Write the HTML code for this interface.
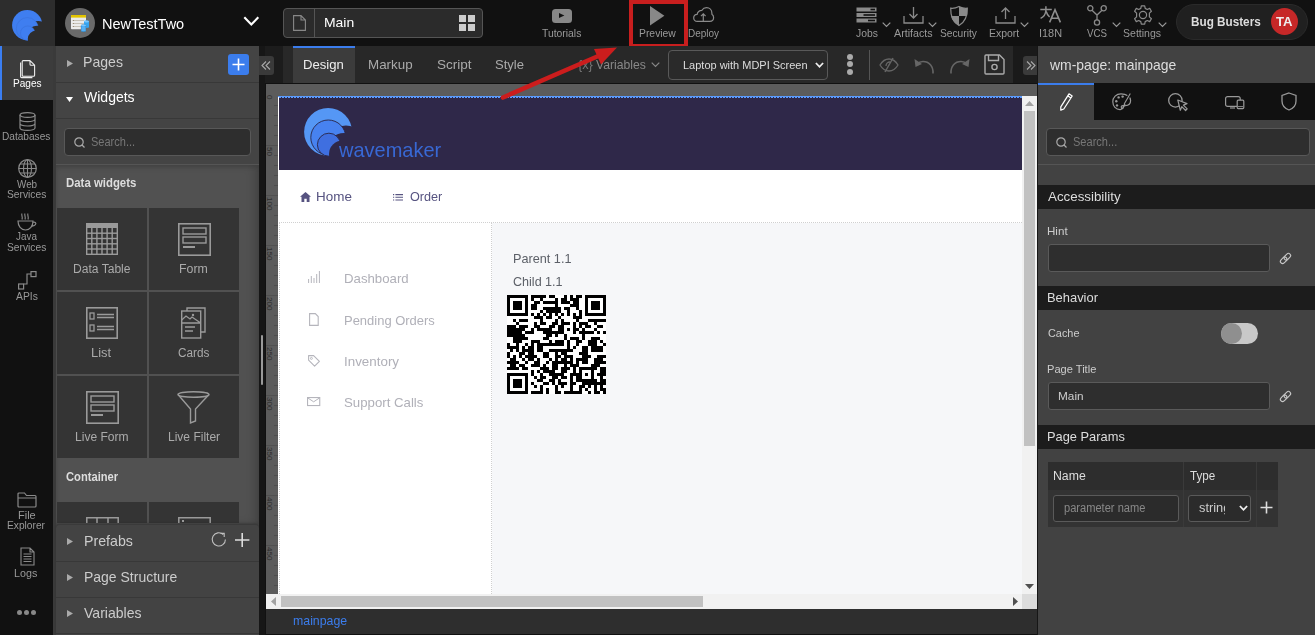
<!DOCTYPE html>
<html><head><meta charset="utf-8">
<style>
*{box-sizing:border-box;margin:0;padding:0}
html,body{width:1315px;height:635px;overflow:hidden;background:#111;font-family:"Liberation Sans",sans-serif}
.a{position:absolute}
.t{position:absolute;white-space:nowrap;line-height:1}
svg{position:absolute;overflow:visible}
</style></head><body>

<!-- ============ TOP BAR ============ -->
<div class="a" style="left:0;top:0;width:1315px;height:46px;background:#111"></div>
<div class="a" style="left:0;top:0;width:55px;height:46px;background:#2d2d2d"></div>
<!-- logo -->
<svg style="left:12px;top:9.6px" width="29.70" height="30.97" viewBox="0 0 47 49">
<defs><mask id="m1t"><rect x="-5" y="-5" width="60" height="60" fill="#fff"/><circle cx="42" cy="38" r="20.5" fill="#000"/></mask>
<mask id="m2t"><rect x="-5" y="-5" width="60" height="60" fill="#fff"/><circle cx="40" cy="42" r="17" fill="#000"/></mask>
<mask id="m3t"><rect x="-5" y="-5" width="60" height="60" fill="#fff"/><circle cx="38.5" cy="46" r="13.5" fill="#000"/></mask></defs>
<circle cx="24.1" cy="23.9" r="24" fill="#3f7ef0" mask="url(#m1t)"/>
<circle cx="24.3" cy="29.5" r="17.5" fill="#3f7ef0" stroke="#3a70d8" stroke-width="0.8" mask="url(#m2t)"/>
<circle cx="24.9" cy="36.7" r="11.5" fill="#3f7ef0" stroke="#3a70d8" stroke-width="0.8" mask="url(#m3t)"/>
</svg>
<!-- app icon -->
<div class="a" style="left:65px;top:8px;width:30px;height:30px;border-radius:50%;background:#6a6a6a"></div>
<svg style="left:71px;top:15px" width="19" height="18" viewBox="0 0 19 18">
<rect x="0" y="0" width="15" height="14.3" rx="0.8" fill="#ebebeb"/>
<rect x="0" y="0" width="15" height="2.6" fill="#e3c400"/>
<path d="M2 5.5 H13 M2 8.5 H13 M2 11.5 H13" stroke="#b8b0a0" stroke-width="0.7"/>
<circle cx="2.3" cy="5.5" r="0.6" fill="#8a7a60"/><circle cx="2.3" cy="8.5" r="0.6" fill="#8a7a60"/><circle cx="2.3" cy="11.5" r="0.6" fill="#8a7a60"/>
<path d="M13 6.5 C13 5.3 18 5.3 18 6.5 V12 C18 13.2 13 13.2 13 12Z" fill="#35a4f0"/>
<ellipse cx="15.5" cy="6.5" rx="2.5" ry="1" fill="#7cc8ff"/>
<path d="M10 10.5 C10 9.3 15 9.3 15 10.5 V16 C15 17.2 10 17.2 10 16Z" fill="#2d9cf0" stroke="#6a6a6a" stroke-width="0.3"/>
<ellipse cx="12.5" cy="10.5" rx="2.5" ry="1" fill="#7cc8ff"/>
<path d="M10.5 13 H14.5 M10.5 15 H14.5" stroke="#bfe3ff" stroke-width="0.6"/>
</svg>
<div class="t" style="left:102.33px;top:17.00px;font-size:14.5px;color:#fff;transform-origin:0 0;transform:scaleX(0.9999)">NewTestTwo</div>
<svg style="left:242.5px;top:15.5px" width="17" height="11" viewBox="0 0 17 11"><path d="M1.3 1.3 L8.3 8.6 L15.3 1.3" stroke="#fff" stroke-width="2.1" fill="none"/></svg>

<!-- page selector -->
<div class="a" style="left:283px;top:8px;width:200px;height:30px;border:1px solid #555;border-radius:4px;background:#2b2b2b"></div>
<div class="a" style="left:314px;top:9px;width:1px;height:28px;background:#555"></div>
<svg style="left:292.5px;top:15px" width="14" height="16" viewBox="0 0 14 16"><path d="M0.6 0.6 H8 L12.4 5 V15.4 H0.6Z M8 0.6 V5 H12.4" stroke="#888" stroke-width="1.1" fill="none"/></svg>
<div class="t" style="left:323.93px;top:16.00px;font-size:13px;color:#fff;transform-origin:0 0;transform:scaleX(1.0726)">Main</div>
<div class="a" style="left:459px;top:15px;width:7px;height:7px;background:#ccc"></div>
<div class="a" style="left:468px;top:15px;width:7px;height:7px;background:#ccc"></div>
<div class="a" style="left:459px;top:24px;width:7px;height:7px;background:#ccc"></div>
<div class="a" style="left:468px;top:24px;width:7px;height:7px;background:#ccc"></div>

<!-- top tools -->

<!-- Jobs -->
<svg style="left:856px;top:7px" width="21" height="16" viewBox="0 0 21 16">
 <rect x="0.5" y="0.5" width="20" height="4" fill="#8a8a8a"/><rect x="0.5" y="6" width="20" height="4" fill="#8a8a8a"/><rect x="0.5" y="11.5" width="20" height="4" fill="#8a8a8a"/>
 <rect x="14.5" y="1.7" width="4.5" height="1.6" fill="#111"/><rect x="7.5" y="7.2" width="11.5" height="1.6" fill="#111"/><rect x="12" y="12.7" width="7" height="1.6" fill="#111"/>
</svg>
<svg style="left:882px;top:22px" width="9" height="6" viewBox="0 0 9 6"><path d="M0.7 0.7 L4.5 4.5 L8.3 0.7" stroke="#999" stroke-width="1.2" fill="none"/></svg>
<div class="t" style="left:855.64px;top:28.00px;font-size:11px;color:#999;transform-origin:0 0;transform:scaleX(0.9410)">Jobs</div>
<!-- Artifacts -->
<svg style="left:903px;top:7px" width="21" height="17" viewBox="0 0 21 17"><path d="M10.5 0 V11 M6.5 7 L10.5 11 L14.5 7 M1 9 V16 H20 V9" stroke="#8a8a8a" stroke-width="1.3" fill="none"/></svg>
<svg style="left:928px;top:22px" width="9" height="6" viewBox="0 0 9 6"><path d="M0.7 0.7 L4.5 4.5 L8.3 0.7" stroke="#999" stroke-width="1.2" fill="none"/></svg>
<div class="t" style="left:893.68px;top:28.00px;font-size:11px;color:#999;transform-origin:0 0;transform:scaleX(0.9729)">Artifacts</div>
<!-- Security -->
<svg style="left:950px;top:6px" width="18" height="20" viewBox="0 0 18 20"><path d="M9 0.5 C6 2 3 2.5 0.7 2.2 C0.5 10 3 16 9 19.5 C15 16 17.5 10 17.3 2.2 C15 2.5 12 2 9 0.5Z" stroke="#8a8a8a" stroke-width="1.2" fill="none"/><path d="M9 0.5 V10 H17.1 C17.3 7 17.4 4.5 17.3 2.2 C15 2.5 12 2 9 0.5Z M9 10 H1 C2 14 4.5 17.5 9 19.5Z" fill="#8a8a8a"/></svg>
<div class="t" style="left:940.32px;top:28.00px;font-size:11px;color:#999;transform-origin:0 0;transform:scaleX(0.9267)">Security</div>
<!-- Export -->
<svg style="left:995px;top:7px" width="21" height="17" viewBox="0 0 21 17"><path d="M10.5 12 V1 M6.5 5 L10.5 1 L14.5 5 M1 9 V16 H20 V9" stroke="#8a8a8a" stroke-width="1.3" fill="none"/></svg>
<svg style="left:1020px;top:22px" width="9" height="6" viewBox="0 0 9 6"><path d="M0.7 0.7 L4.5 4.5 L8.3 0.7" stroke="#999" stroke-width="1.2" fill="none"/></svg>
<div class="t" style="left:988.96px;top:28.00px;font-size:11px;color:#999;transform-origin:0 0;transform:scaleX(0.9508)">Export</div>
<!-- I18N -->
<svg style="left:1040px;top:6px" width="22" height="17" viewBox="0 0 22 17"><path d="M0.3 3.6 H11.8 M5.9 0.3 V4.5 C5.6 8 3.6 11 0.6 12.4 M6.2 5.5 C7 8.2 8.4 10 9.6 11" stroke="#8e8e8e" stroke-width="1.5" fill="none"/><path d="M9.6 16.4 L15 3.8 L20.4 16.4 M11.4 12.2 H18.6" stroke="#8e8e8e" stroke-width="1.6" fill="none"/></svg>

<div class="t" style="left:1038.76px;top:28.00px;font-size:11px;color:#999;transform-origin:0 0;transform:scaleX(0.9931)">I18N</div>
<!-- VCS -->
<svg style="left:1087px;top:5px" width="20" height="21" viewBox="0 0 20 21"><circle cx="3.3" cy="3.3" r="2.6" stroke="#8a8a8a" stroke-width="1.3" fill="none"/><circle cx="16.7" cy="3.3" r="2.6" stroke="#8a8a8a" stroke-width="1.3" fill="none"/><circle cx="10" cy="17.5" r="2.6" stroke="#8a8a8a" stroke-width="1.3" fill="none"/><path d="M5 5.3 L10 10 L15 5.3 M10 10 V15" stroke="#8a8a8a" stroke-width="1.3" fill="none"/></svg>
<svg style="left:1112px;top:22px" width="9" height="6" viewBox="0 0 9 6"><path d="M0.7 0.7 L4.5 4.5 L8.3 0.7" stroke="#999" stroke-width="1.2" fill="none"/></svg>
<div class="t" style="left:1086.69px;top:28.00px;font-size:11px;color:#999;transform-origin:0 0;transform:scaleX(0.8859)">VCS</div>
<!-- Settings -->
<svg style="left:1133px;top:5px" width="20" height="20" viewBox="0 0 20 20"><path id="gear" d="M8.3 0.8 H11.7 L12.2 3.4 L14.3 4.5 L16.7 3.4 L18.4 6.3 L16.4 8.1 V11.9 L18.4 13.7 L16.7 16.6 L14.3 15.5 L12.2 16.6 L11.7 19.2 H8.3 L7.8 16.6 L5.7 15.5 L3.3 16.6 L1.6 13.7 L3.6 11.9 V8.1 L1.6 6.3 L3.3 3.4 L5.7 4.5 L7.8 3.4Z" stroke="#8a8a8a" stroke-width="1.2" fill="none" stroke-linejoin="round"/><circle cx="10" cy="10" r="3.6" stroke="#8a8a8a" stroke-width="1.2" fill="none"/></svg>
<svg style="left:1158px;top:22px" width="9" height="6" viewBox="0 0 9 6"><path d="M0.7 0.7 L4.5 4.5 L8.3 0.7" stroke="#999" stroke-width="1.2" fill="none"/></svg>
<div class="t" style="left:1123.29px;top:28.00px;font-size:11px;color:#999;transform-origin:0 0;transform:scaleX(0.9574)">Settings</div>

<!-- Tutorials -->
<div class="a" style="left:551.6px;top:8.7px;width:20px;height:14.1px;background:#888;border-radius:3.5px"></div>
<svg style="left:559.4px;top:12.9px" width="6" height="6" viewBox="0 0 6 6"><path d="M0 0 L5.4 2.5 L0 5Z" fill="#111"/></svg>
<div class="t tl" style="left:542.03px;top:28.00px;font-size:11px;color:#999;transform-origin:0 0;transform:scaleX(0.9415)">Tutorials</div>
<!-- Preview -->
<div class="a" style="left:629.3px;top:0;width:58.4px;height:47.6px;border:4.7px solid #c81e1e;border-top-width:4px"></div>
<svg style="left:650.4px;top:5.7px" width="15" height="20" viewBox="0 0 15 20"><path d="M0 0 L14.4 9.7 L0 19.4Z" fill="#888"/></svg>
<div class="t" style="left:638.77px;top:28.00px;font-size:11px;color:#999;transform-origin:0 0;transform:scaleX(0.9421)">Preview</div>
<!-- Deploy -->
<svg style="left:693px;top:7px" width="22" height="16" viewBox="0 0 22 16"><path d="M4.2 14.4 C2 14.4 0.7 12.8 0.7 10.9 C0.7 9 2.1 7.5 4.1 7.4 C4.6 5 6.5 3.3 8.9 3.3 C9.9 1.7 11.6 0.7 13.5 0.7 C16.6 0.7 18.9 3.1 18.9 6.2 V7.2 C20.1 7.9 20.6 9.1 20.6 10.6 C20.6 12.8 19 14.4 16.8 14.4Z" stroke="#8a8a8a" stroke-width="1.2" fill="none"/><path d="M10.3 14.4 V6.8 M8 9.1 L10.3 6.8 L12.6 9.1" stroke="#8a8a8a" stroke-width="1.2" fill="none"/></svg>
<div class="t" style="left:687.97px;top:28.00px;font-size:11px;color:#999;transform-origin:0 0;transform:scaleX(0.9082)">Deploy</div>

<!-- Bug Busters pill -->
<div class="a" style="left:1176px;top:4.2px;width:131.8px;height:35.8px;border-radius:18px;background:#202020;border:1px solid #2a2a2a"></div>
<div class="t" style="left:1191.18px;top:16.00px;font-size:12px;font-weight:bold;color:#ddd;transform-origin:0 0;transform:scaleX(0.9771)">Bug Busters</div>
<div class="a" style="left:1270.6px;top:7.6px;width:27.8px;height:27.8px;border-radius:50%;background:#c62828"></div>
<div class="t" style="left:1275.66px;top:16.00px;font-size:12px;font-weight:bold;color:#eee;transform-origin:0 0;transform:scaleX(1.0958)">TA</div>

<!-- ============ LEFT SIDEBAR ============ -->
<div class="a" style="left:0;top:46px;width:55px;height:589px;background:#111"></div>
<div class="a" style="left:0;top:46px;width:55px;height:54px;background:#3c3c3c"></div>
<div class="a" style="left:0;top:46px;width:1.5px;height:54px;background:#3a7ef2"></div>


<!-- Pages icon -->
<svg style="left:19.5px;top:59.5px" width="16" height="18" viewBox="0 0 16 18"><path d="M3.2 0.6 H10 L14.6 5.2 V15.2 C14.6 15.8 14.2 16.2 13.6 16.2 H3.2 C2.6 16.2 2.2 15.8 2.2 15.2 V1.6 C2.2 1 2.6 0.6 3.2 0.6Z M10 0.6 V4.2 C10 4.8 10.4 5.2 11 5.2 H14.6" stroke="#eee" stroke-width="1.1" fill="none" stroke-linejoin="round"/><path d="M0.6 2.6 V16.6 C0.6 17.2 1 17.6 1.6 17.6 H12.4" stroke="#eee" stroke-width="1.1" fill="none"/></svg>
<div class="t" style="left:12.50px;top:78.00px;font-size:11px;color:#fff;transform-origin:0 0;transform:scaleX(0.9186)">Pages</div>
<!-- Databases -->
<svg style="left:19px;top:112px" width="17" height="19" viewBox="0 0 17 19"><ellipse cx="8.5" cy="3" rx="7.5" ry="2.4" stroke="#8a8a8a" stroke-width="1.2" fill="none"/><path d="M1 3 V16 C1 17.4 4.5 18.4 8.5 18.4 C12.5 18.4 16 17.4 16 16 V3 M1 7.3 C1 8.7 4.5 9.7 8.5 9.7 C12.5 9.7 16 8.7 16 7.3 M1 11.6 C1 13 4.5 14 8.5 14 C12.5 14 16 13 16 11.6" stroke="#8a8a8a" stroke-width="1.2" fill="none"/></svg>
<div class="t" style="left:2.46px;top:131.00px;font-size:11px;color:#999;transform-origin:0 0;transform:scaleX(0.9192)">Databases</div>
<!-- Web Services -->
<svg style="left:18px;top:159px" width="19" height="19" viewBox="0 0 19 19"><circle cx="9.5" cy="9.5" r="8.8" stroke="#8a8a8a" stroke-width="1.2" fill="none"/><ellipse cx="9.5" cy="9.5" rx="4" ry="8.8" stroke="#8a8a8a" stroke-width="1.1" fill="none"/><path d="M9.5 0.7 V18.3 M0.7 9.5 H18.3 M2 5 H17 M2 14 H17" stroke="#8a8a8a" stroke-width="1.1" fill="none"/></svg>
<div class="t" style="left:17.31px;top:179.00px;font-size:11px;color:#999;transform-origin:0 0;transform:scaleX(0.8970)">Web</div>
<div class="t" style="left:7.01px;top:189.00px;font-size:11px;color:#999;transform-origin:0 0;transform:scaleX(0.9325)">Services</div>
<!-- Java -->
<svg style="left:17px;top:213px" width="20" height="18" viewBox="0 0 20 18"><path d="M5 0.5 C4 2 6 3.5 5 6.5 M8 0.5 C7 2 9 3.5 8 6.5 M11 0.5 C10 2 12 3.5 11 6.5" stroke="#8a8a8a" stroke-width="1.1" fill="none"/><path d="M1 8 H16 C16 13 13 17 8.5 17 C4 17 1 13 1 8Z M15.5 9.5 C18 8.5 19.5 10 18.5 11.5 C17.5 13 15.5 13 14 13.5" stroke="#8a8a8a" stroke-width="1.2" fill="none"/></svg>
<div class="t" style="left:16.45px;top:231.00px;font-size:11px;color:#999;transform-origin:0 0;transform:scaleX(0.9016)">Java</div>
<div class="t" style="left:7.01px;top:242.00px;font-size:11px;color:#999;transform-origin:0 0;transform:scaleX(0.9325)">Services</div>
<!-- APIs -->
<svg style="left:18px;top:271px" width="19" height="19" viewBox="0 0 19 19"><rect x="0.6" y="13" width="5" height="5" stroke="#8a8a8a" stroke-width="1.2" fill="none"/><rect x="13" y="0.6" width="5" height="5" stroke="#8a8a8a" stroke-width="1.2" fill="none"/><path d="M5.6 13 H9 V3 H13" stroke="#8a8a8a" stroke-width="1.2" fill="none"/></svg>
<div class="t" style="left:16.19px;top:291.00px;font-size:11px;color:#999;transform-origin:0 0;transform:scaleX(0.9385)">APIs</div>
<!-- File Explorer -->
<svg style="left:17px;top:492px" width="20" height="16" viewBox="0 0 20 16"><path d="M1 2 C1 1.3 1.3 1 2 1 H7.5 L9.5 3.5 H18 C18.7 3.5 19 3.8 19 4.5 V14 C19 14.7 18.7 15 18 15 H2 C1.3 15 1 14.7 1 14Z M1 6 H19" stroke="#8a8a8a" stroke-width="1.2" fill="none"/></svg>
<div class="t" style="left:17.61px;top:510.00px;font-size:11px;color:#999;transform-origin:0 0;transform:scaleX(0.9993)">File</div>
<div class="t" style="left:7.09px;top:520.00px;font-size:11px;color:#999;transform-origin:0 0;transform:scaleX(0.9267)">Explorer</div>
<!-- Logs -->
<svg style="left:20px;top:547px" width="15" height="19" viewBox="0 0 15 19"><path d="M1 1 H10 L14 5 V18 H1Z M10 1 V5 H14 M3.5 7 H11.5 M3.5 9.5 H11.5 M3.5 12 H11.5 M3.5 14.5 H11.5" stroke="#8a8a8a" stroke-width="1.1" fill="none"/></svg>
<div class="t" style="left:14.39px;top:568.00px;font-size:11px;color:#999;transform-origin:0 0;transform:scaleX(0.9752)">Logs</div>
<!-- dots -->
<div class="a" style="left:17.4px;top:609.8px;width:5px;height:5px;border-radius:50%;background:#888"></div>
<div class="a" style="left:24.1px;top:609.8px;width:5px;height:5px;border-radius:50%;background:#888"></div>
<div class="a" style="left:30.8px;top:609.8px;width:5px;height:5px;border-radius:50%;background:#888"></div>

<!-- ============ LEFT PANEL ============ -->

<div class="a" style="left:53px;top:46px;width:3px;height:589px;background:#3a3a3a"></div>
<div class="a" style="left:56px;top:46px;width:203px;height:589px;background:#444"></div>
<!-- Pages header -->
<div class="a" style="left:56px;top:82px;width:203px;height:1px;background:#383838"></div>
<svg style="left:67px;top:60px" width="6" height="7" viewBox="0 0 6 7"><path d="M0 0 L6 3.5 L0 7Z" fill="#aaa"/></svg>
<div class="t" style="left:83.48px;top:54.00px;font-size:15px;color:#ccc;transform-origin:0 0;transform:scaleX(0.9398)">Pages</div>
<div class="a" style="left:228px;top:54px;width:21px;height:21px;border-radius:3px;background:#3b7ded"></div>
<svg style="left:231px;top:57px" width="15" height="15" viewBox="0 0 15 15"><path d="M7.5 1.5 V13.5 M1.5 7.5 H13.5" stroke="#fff" stroke-width="1.6"/></svg>
<!-- Widgets header -->
<div class="a" style="left:56px;top:118px;width:203px;height:1px;background:#383838"></div>
<svg style="left:66px;top:97px" width="7" height="5" viewBox="0 0 7 5"><path d="M0 0 H7 L3.5 5Z" fill="#fff"/></svg>
<div class="t" style="left:84.43px;top:89.00px;font-size:15px;color:#fff;transform-origin:0 0;transform:scaleX(0.9342)">Widgets</div>
<!-- search -->
<div class="a" style="left:64px;top:128px;width:187px;height:28px;border:1px solid #585858;border-radius:4px;background:#2e2e2e"></div>
<svg style="left:74px;top:137px" width="11" height="11" viewBox="0 0 11 11"><circle cx="5" cy="5" r="4.2" stroke="#aaa" stroke-width="1.2" fill="none"/><path d="M8 8 L10.5 10.5" stroke="#aaa" stroke-width="1.2"/></svg>
<div class="t" style="left:91.28px;top:136.00px;font-size:12.5px;color:#777;transform-origin:0 0;transform:scaleX(0.8819)">Search...</div>
<div class="a" style="left:56px;top:164px;width:203px;height:1px;background:#555"></div>
<!-- widgets section -->
<div class="a" style="left:56px;top:165px;width:203px;height:359px;background:#515151;box-shadow:inset 0 2px 4px rgba(0,0,0,.12), inset -5px 0 8px rgba(0,0,0,.15)"></div>
<div class="t" style="left:65.54px;top:177.00px;font-size:12.5px;font-weight:bold;color:#ddd;transform-origin:0 0;transform:scaleX(0.9126)">Data widgets</div>
<div class="a" style="left:57px;top:208px;width:90px;height:82px;background:#343434"></div>
<svg style="left:86px;top:223px" width="32" height="32" viewBox="0 0 32 32"><rect x="0" y="0" width="32" height="5" fill="#9a9a9a"/><rect x="0.7" y="0.7" width="30.6" height="30.6" stroke="#9a9a9a" stroke-width="1.4" fill="none"/><path d="M5.8 5 V31.3" stroke="#9a9a9a" stroke-width="1.4"/><path d="M10.9 5 V31.3" stroke="#9a9a9a" stroke-width="1.4"/><path d="M16.0 5 V31.3" stroke="#9a9a9a" stroke-width="1.4"/><path d="M21.1 5 V31.3" stroke="#9a9a9a" stroke-width="1.4"/><path d="M26.2 5 V31.3" stroke="#9a9a9a" stroke-width="1.4"/><path d="M0 10.2 H32" stroke="#9a9a9a" stroke-width="1.4"/><path d="M0 15.5 H32" stroke="#9a9a9a" stroke-width="1.4"/><path d="M0 20.8 H32" stroke="#9a9a9a" stroke-width="1.4"/><path d="M0 26.0 H32" stroke="#9a9a9a" stroke-width="1.4"/></svg>
<div class="t" style="left:73.08px;top:263.00px;font-size:12px;color:#aaa;transform-origin:0 0;transform:scaleX(1.0063)">Data Table</div>

<div class="a" style="left:149px;top:208px;width:90px;height:82px;background:#343434"></div>
<svg style="left:178px;top:223px" width="33" height="33" viewBox="0 0 33 33"><rect x="0.8" y="0.8" width="31.4" height="31.4" stroke="#9a9a9a" stroke-width="1.6" fill="none"/><rect x="5" y="5" width="23" height="6" stroke="#9a9a9a" stroke-width="1.4" fill="none"/><rect x="5" y="14" width="23" height="6" stroke="#9a9a9a" stroke-width="1.4" fill="none"/><rect x="5" y="23" width="12" height="2" fill="#9a9a9a"/></svg>
<div class="t" style="left:179.45px;top:263.00px;font-size:12px;color:#aaa;transform-origin:0 0;transform:scaleX(1.0304)">Form</div>

<div class="a" style="left:57px;top:292px;width:90px;height:82px;background:#343434"></div>
<svg style="left:86px;top:307px" width="32" height="32" viewBox="0 0 32 32"><rect x="0.8" y="0.8" width="30.4" height="30.4" stroke="#9a9a9a" stroke-width="1.6" fill="none"/><rect x="4" y="6" width="4" height="6" stroke="#9a9a9a" stroke-width="1.3" fill="none"/><rect x="4" y="18" width="4" height="6" stroke="#9a9a9a" stroke-width="1.3" fill="none"/><path d="M11 7.5 H28 M11 10.5 H28 M11 19.5 H28 M11 22.5 H28" stroke="#9a9a9a" stroke-width="1.3"/></svg>
<div class="t" style="left:91.20px;top:347.00px;font-size:12px;color:#aaa;transform-origin:0 0;transform:scaleX(1.0774)">List</div>

<div class="a" style="left:149px;top:292px;width:90px;height:82px;background:#343434"></div>
<svg style="left:181px;top:307px" width="25" height="32" viewBox="0 0 25 32"><path d="M6 4 V1 H24 V25 H20" stroke="#9a9a9a" stroke-width="1.4" fill="none"/><rect x="0.7" y="4" width="19" height="27" stroke="#9a9a9a" stroke-width="1.4" fill="none"/><path d="M0.7 13 L5 9 L9 12 L11 10 L19.7 16 M0.7 16 H19.7 M4 20 H14 M4 24 H12" stroke="#9a9a9a" stroke-width="1.3" fill="none"/><circle cx="12" cy="8" r="1.2" fill="#9a9a9a"/></svg>
<div class="t" style="left:178.15px;top:347.00px;font-size:12px;color:#aaa;transform-origin:0 0;transform:scaleX(0.9801)">Cards</div>

<div class="a" style="left:57px;top:376px;width:90px;height:82px;background:#343434"></div>
<svg style="left:86px;top:391px" width="33" height="33" viewBox="0 0 33 33"><rect x="0.8" y="0.8" width="31.4" height="31.4" stroke="#9a9a9a" stroke-width="1.6" fill="none"/><rect x="5" y="5" width="23" height="6" stroke="#9a9a9a" stroke-width="1.4" fill="none"/><rect x="5" y="14" width="23" height="6" stroke="#9a9a9a" stroke-width="1.4" fill="none"/><rect x="5" y="23" width="12" height="2" fill="#9a9a9a"/></svg>
<div class="t" style="left:75.08px;top:431.00px;font-size:12px;color:#aaa;transform-origin:0 0;transform:scaleX(1.0038)">Live Form</div>

<div class="a" style="left:149px;top:376px;width:90px;height:82px;background:#343434"></div>
<svg style="left:177px;top:391px" width="33" height="33" viewBox="0 0 33 33"><ellipse cx="16.5" cy="3.5" rx="15.5" ry="2.8" stroke="#9a9a9a" stroke-width="1.4" fill="none"/><path d="M1 3.5 L13.5 18 V32 L18.5 30 V18 L32 3.5" stroke="#9a9a9a" stroke-width="1.4" fill="none"/></svg>
<div class="t" style="left:167.68px;top:431.00px;font-size:12px;color:#aaa;transform-origin:0 0;transform:scaleX(1.0012)">Live Filter</div>

<div class="t" style="left:65.78px;top:471.00px;font-size:12.5px;font-weight:bold;color:#ddd;transform-origin:0 0;transform:scaleX(0.8940)">Container</div>
<div class="a" style="left:57px;top:502px;width:90px;height:21px;background:#343434"></div>
<div class="a" style="left:149px;top:502px;width:90px;height:21px;background:#343434"></div>
<svg style="left:86px;top:517px" width="33" height="6" viewBox="0 0 33 6"><path d="M0.8 6 V0.8 H32.2 V6 M11 0.8 V6 M22 0.8 V6" stroke="#9a9a9a" stroke-width="1.5" fill="none"/></svg>
<svg style="left:178px;top:517px" width="33" height="6" viewBox="0 0 33 6"><path d="M0.8 6 V0.8 H32.2 V6" stroke="#9a9a9a" stroke-width="1.5" fill="none"/><rect x="4" y="3" width="2" height="2" fill="#9a9a9a"/></svg>
<!-- bottom headers -->
<div class="a" style="left:56px;top:524px;width:203px;height:111px;background:#434343;border-top:1px solid #3a3a3a;border-radius:4px 4px 0 0;box-shadow:0 -1px 2px rgba(0,0,0,.15)"></div>
<div class="a" style="left:56px;top:561px;width:203px;height:1px;background:#383838"></div>
<div class="a" style="left:56px;top:597px;width:203px;height:1px;background:#383838"></div>
<div class="a" style="left:56px;top:633px;width:203px;height:1px;background:#383838"></div>
<svg style="left:67px;top:538px" width="6" height="7" viewBox="0 0 6 7"><path d="M0 0 L6 3.5 L0 7Z" fill="#aaa"/></svg>
<div class="t" style="left:83.57px;top:533.00px;font-size:15px;color:#ccc;transform-origin:0 0;transform:scaleX(0.9461)">Prefabs</div>
<svg style="left:210.5px;top:532.3px" width="16" height="16" viewBox="0 0 16 16"><path d="M14.4 7.4 A6.6 6.6 0 1 1 12.3 2.6" stroke="#c0c0c0" stroke-width="1.1" fill="none"/><path d="M9.6 1.4 L13.2 1.4 L13.2 5" stroke="#c0c0c0" stroke-width="1.1" fill="none"/></svg>
<svg style="left:234.7px;top:533px" width="15" height="14" viewBox="0 0 15 14"><path d="M7.2 0 V14 M0 7 H14.4" stroke="#ddd" stroke-width="1.6"/></svg>
<svg style="left:67px;top:574px" width="6" height="7" viewBox="0 0 6 7"><path d="M0 0 L6 3.5 L0 7Z" fill="#aaa"/></svg>
<div class="t" style="left:83.59px;top:569.00px;font-size:15px;color:#ccc;transform-origin:0 0;transform:scaleX(0.9319)">Page Structure</div>
<svg style="left:67px;top:610px" width="6" height="7" viewBox="0 0 6 7"><path d="M0 0 L6 3.5 L0 7Z" fill="#aaa"/></svg>
<div class="t" style="left:84.47px;top:605.00px;font-size:15px;color:#ccc;transform-origin:0 0;transform:scaleX(0.9357)">Variables</div>


<!-- ============ TOOLBAR ============ -->
<div class="a" style="left:259px;top:46px;width:6px;height:589px;background:#161616"></div>
<div class="a" style="left:261px;top:335px;width:2px;height:50px;background:#9a9a9a;border-radius:1px"></div>


<div class="a" style="left:265px;top:46px;width:772px;height:37px;background:#282828"></div>
<div class="a" style="left:265px;top:46px;width:18px;height:37px;background:#1c1c1c"></div>
<div class="a" style="left:259px;top:56px;width:15px;height:19px;background:#3a3a3a;border-radius:0 3px 3px 0"></div>
<svg style="left:261px;top:61px" width="10" height="9" viewBox="0 0 10 9"><path d="M5 0.5 L1 4.5 L5 8.5 M9 0.5 L5 4.5 L9 8.5" stroke="#aaa" stroke-width="1.1" fill="none"/></svg>
<div class="a" style="left:293px;top:46px;width:62px;height:37px;background:#3c3c3c;border-top:2px solid #3b7ded"></div>
<div class="t" style="left:303.31px;top:58.00px;font-size:13px;color:#eee;transform-origin:0 0;transform:scaleX(1.0079)">Design</div>
<div class="t" style="left:367.78px;top:58.00px;font-size:13px;color:#aaa;transform-origin:0 0;transform:scaleX(1.0284)">Markup</div>
<div class="t" style="left:436.78px;top:58.00px;font-size:13px;color:#aaa;transform-origin:0 0;transform:scaleX(1.0420)">Script</div>
<div class="t" style="left:495.43px;top:58.00px;font-size:13px;color:#aaa;transform-origin:0 0;transform:scaleX(1.0043)">Style</div>
<div class="t" style="left:577.52px;top:58.00px;font-size:13px;color:#777;transform-origin:0 0;transform:scaleX(0.9750)">{x}</div>
<div class="t" style="left:596.17px;top:58.00px;font-size:13px;color:#888;transform-origin:0 0;transform:scaleX(0.9373)">Variables</div>
<svg style="left:651px;top:62px" width="9" height="6" viewBox="0 0 9 6"><path d="M0.7 0.7 L4.5 4.5 L8.3 0.7" stroke="#888" stroke-width="1.2" fill="none"/></svg>
<div class="a" style="left:668px;top:50px;width:160px;height:30px;border:1px solid #595959;border-radius:4px;background:#2a2a2a"></div>
<div class="t" style="left:682.54px;top:60.00px;font-size:11.5px;color:#ddd;transform-origin:0 0;transform:scaleX(0.9552)">Laptop with MDPI Screen</div>
<svg style="left:815px;top:62px" width="9" height="7" viewBox="0 0 9 7"><path d="M0.9 1 L4.5 4.8 L8.1 1" stroke="#eee" stroke-width="1.8" fill="none"/></svg>
<div class="a" style="left:847px;top:54px;width:6px;height:6px;border-radius:50%;background:#aaa"></div>
<div class="a" style="left:847px;top:61px;width:6px;height:6px;border-radius:50%;background:#aaa"></div>
<div class="a" style="left:847px;top:69px;width:6px;height:6px;border-radius:50%;background:#aaa"></div>
<div class="a" style="left:869px;top:50px;width:1px;height:30px;background:#555"></div>
<svg style="left:879px;top:57px" width="20" height="16" viewBox="0 0 20 16"><path d="M1 8 C4 3 7 2 10 2 C13 2 16 3 19 8 C16 13 13 14 10 14 C7 14 4 13 1 8Z" stroke="#666" stroke-width="1.3" fill="none"/><path d="M14 1 L6 15" stroke="#666" stroke-width="1.5"/><path d="M7 9 C7 6 9 5 11 5" stroke="#666" stroke-width="1.3" fill="none"/></svg>
<svg style="left:914px;top:56px" width="21" height="18" viewBox="0 0 21 18"><path d="M19 17.5 C19.5 10 15 5.5 9 5.5 C6.5 5.5 4.5 6.5 3 8" stroke="#666" stroke-width="1.6" fill="none"/><path d="M0.5 3 L1.5 11 L8 8Z" fill="#666"/></svg>
<svg style="left:949px;top:56px" width="21" height="18" viewBox="0 0 21 18"><path d="M2 17.5 C1.5 10 6 5.5 12 5.5 C14.5 5.5 16.5 6.5 18 8" stroke="#666" stroke-width="1.6" fill="none"/><path d="M20.5 3 L19.5 11 L13 8Z" fill="#666"/></svg>
<svg style="left:983.5px;top:54px" width="21" height="21" viewBox="0 0 21 21"><path d="M1 2 C1 1.4 1.4 1 2 1 H15.5 L20 5.5 V19 C20 19.6 19.6 20 19 20 H2 C1.4 20 1 19.6 1 19Z" stroke="#aaa" stroke-width="1.4" fill="none"/><path d="M4.5 1 V6.5 H14.5 V1" stroke="#aaa" stroke-width="1.4" fill="none"/><circle cx="10.5" cy="13" r="2.6" stroke="#aaa" stroke-width="1.4" fill="none"/></svg>
<div class="a" style="left:1013px;top:46px;width:25px;height:37px;background:#1a1a1a"></div>
<div class="a" style="left:1023px;top:56px;width:15px;height:19px;background:#3a3a3a;border-radius:3px 0 0 3px"></div>
<svg style="left:1026px;top:61px" width="10" height="9" viewBox="0 0 10 9"><path d="M1 0.5 L5 4.5 L1 8.5 M5 0.5 L9 4.5 L5 8.5" stroke="#aaa" stroke-width="1.1" fill="none"/></svg>


<!-- ============ CANVAS ============ -->

<div class="a" style="left:265px;top:83px;width:773px;height:552px;background:#111"></div>
<div class="a" style="left:266px;top:84px;width:771px;height:525px;background:#5c5c5c"></div>
<!-- ruler numbers -->
<svg style="left:0;top:0" width="1315" height="635" viewBox="0 0 1315 635"><path d="M274 105.5 H278 M274 115.5 H278 M274 125.5 H278 M274 135.5 H278 M274 155.5 H278 M274 165.5 H278 M274 175.5 H278 M274 185.5 H278 M274 205.5 H278 M274 215.5 H278 M274 225.5 H278 M274 235.5 H278 M274 255.5 H278 M274 265.5 H278 M274 275.5 H278 M274 285.5 H278 M274 305.5 H278 M274 315.5 H278 M274 325.5 H278 M274 335.5 H278 M274 355.5 H278 M274 365.5 H278 M274 375.5 H278 M274 385.5 H278 M274 405.5 H278 M274 415.5 H278 M274 425.5 H278 M274 435.5 H278 M274 455.5 H278 M274 465.5 H278 M274 475.5 H278 M274 485.5 H278 M274 505.5 H278 M274 515.5 H278 M274 525.5 H278 M274 535.5 H278 M274 555.5 H278 M274 565.5 H278 M274 575.5 H278 M274 585.5 H278 " stroke="#4e4e4e" stroke-width="1"/><path d="M266 145.5 H278 M266 195.5 H278 M266 245.5 H278 M266 295.5 H278 M266 345.5 H278 M266 395.5 H278 M266 445.5 H278 M266 495.5 H278 M266 545.5 H278 " stroke="#505050" stroke-width="1"/></svg>
<div class="t" style="left:273px;top:95.3px;font-size:8px;color:#2c2c2c;transform-origin:0 0;transform:rotate(90deg)">0</div>
<div class="t" style="left:273px;top:146.5px;font-size:8px;color:#2c2c2c;transform-origin:0 0;transform:rotate(90deg)">50</div>
<div class="t" style="left:273px;top:196.5px;font-size:8px;color:#2c2c2c;transform-origin:0 0;transform:rotate(90deg)">100</div>
<div class="t" style="left:273px;top:246.5px;font-size:8px;color:#2c2c2c;transform-origin:0 0;transform:rotate(90deg)">150</div>
<div class="t" style="left:273px;top:296.5px;font-size:8px;color:#2c2c2c;transform-origin:0 0;transform:rotate(90deg)">200</div>
<div class="t" style="left:273px;top:346.5px;font-size:8px;color:#2c2c2c;transform-origin:0 0;transform:rotate(90deg)">250</div>
<div class="t" style="left:273px;top:396.5px;font-size:8px;color:#2c2c2c;transform-origin:0 0;transform:rotate(90deg)">300</div>
<div class="t" style="left:273px;top:446.5px;font-size:8px;color:#2c2c2c;transform-origin:0 0;transform:rotate(90deg)">350</div>
<div class="t" style="left:273px;top:496.5px;font-size:8px;color:#2c2c2c;transform-origin:0 0;transform:rotate(90deg)">400</div>
<div class="t" style="left:273px;top:546.5px;font-size:8px;color:#2c2c2c;transform-origin:0 0;transform:rotate(90deg)">450</div>
<div class="a" style="left:278px;top:96px;width:744px;height:498px;background:#fff"></div>
<!-- header -->
<div class="a" style="left:279px;top:97px;width:743px;height:73px;background:#2f2849"></div>
<div class="a" style="left:278px;top:96px;width:744px;height:1px;background:#5b9cff"></div><div class="a" style="left:279px;top:97px;width:743px;height:1px;background:repeating-linear-gradient(90deg,#5b9cff 0 1.5px,transparent 1.5px 3px)"></div>
<svg style="left:304px;top:108px" width="47.00" height="49.00" viewBox="0 0 47 49">
<defs><mask id="m1c"><rect x="-5" y="-5" width="60" height="60" fill="#fff"/><circle cx="42" cy="38" r="20.5" fill="#000"/></mask>
<mask id="m2c"><rect x="-5" y="-5" width="60" height="60" fill="#fff"/><circle cx="40" cy="42" r="17" fill="#000"/></mask>
<mask id="m3c"><rect x="-5" y="-5" width="60" height="60" fill="#fff"/><circle cx="38.5" cy="46" r="13.5" fill="#000"/></mask></defs>
<circle cx="24.1" cy="23.9" r="24" fill="#5597f5" mask="url(#m1c)"/>
<circle cx="24.3" cy="29.5" r="17.5" fill="#4782f0" stroke="#2a2545" stroke-width="0.9" mask="url(#m2c)"/>
<circle cx="24.9" cy="36.7" r="11.5" fill="#3f6fe0" stroke="#2a2545" stroke-width="0.9" mask="url(#m3c)"/>
</svg>
<div class="t" style="left:339.20px;top:139.00px;font-size:21px;color:#3868d4;transform-origin:0 0;transform:scaleX(0.9518)">wavemaker</div>
<!-- nav -->
<svg style="left:300px;top:192px" width="11" height="10" viewBox="0 0 11 10"><path d="M5.5 0 L11 4.8 H9.5 V10 H6.7 V6.8 H4.3 V10 H1.5 V4.8 H0Z" fill="#565380"/></svg>
<div class="t" style="left:316.28px;top:190.00px;font-size:13px;color:#565380;transform-origin:0 0;transform:scaleX(1.0342)">Home</div>
<svg style="left:393px;top:193.8px" width="10" height="7" viewBox="0 0 10 7"><path d="M0 0.6 H1.2 M2.4 0.6 H10 M0 3.3 H1.2 M2.4 3.3 H10 M0 6 H1.2 M2.4 6 H10" stroke="#565380" stroke-width="1.1"/></svg>
<div class="t" style="left:409.66px;top:190.00px;font-size:13px;color:#565380;transform-origin:0 0;transform:scaleX(0.9727)">Order</div>
<div class="a" style="left:279px;top:222px;width:743px;height:0;border-top:1px dotted #d0d0d0"></div>
<!-- content -->
<div class="a" style="left:492px;top:223px;width:530px;height:371px;background:#f6f7f9"></div>
<div class="a" style="left:491px;top:223px;width:0;height:371px;border-left:1px dotted #d0d0d0"></div>
<div class="a" style="left:279px;top:223px;width:0;height:371px;border-left:1px dotted #d0d0d0"></div>
<!-- left nav -->
<svg style="left:308px;top:271px" width="12" height="12" viewBox="0 0 12 12"><path d="M0.6 8 V12 M3.3 5 V12 M6 7 V12 M8.7 3 V12 M11.4 0 V12" stroke="#b5b5bc" stroke-width="1"/></svg>
<div class="t" style="left:343.81px;top:272.00px;font-size:13.5px;color:#b0b0b8;transform-origin:0 0;transform:scaleX(0.9791)">Dashboard</div>
<svg style="left:308.5px;top:313px" width="10" height="13" viewBox="0 0 10 13"><path d="M0.6 0.6 H6.3 L9.2 3.5 V12.4 H0.6Z" stroke="#b5b5bc" stroke-width="1.1" fill="none"/></svg>
<div class="t" style="left:343.84px;top:314.00px;font-size:13.5px;color:#b0b0b8;transform-origin:0 0;transform:scaleX(0.9608)">Pending Orders</div>
<svg style="left:307.5px;top:354.5px" width="12" height="12" viewBox="0 0 12 12"><path d="M0.6 0.6 H5.6 L11.4 6.4 L6.6 11.2 L0.6 5.2Z" stroke="#b5b5bc" stroke-width="1.1" fill="none" stroke-linejoin="round"/><circle cx="3.4" cy="3.4" r="1" stroke="#b5b5bc" stroke-width="0.9" fill="none"/></svg>
<div class="t" style="left:343.69px;top:355.00px;font-size:13.5px;color:#b0b0b8;transform-origin:0 0;transform:scaleX(0.9914)">Inventory</div>
<svg style="left:306.8px;top:396.8px" width="14" height="10" viewBox="0 0 14 10"><rect x="0.55" y="0.55" width="12.2" height="8" stroke="#b5b5bc" stroke-width="1.1" fill="none"/><path d="M0.6 0.8 L6.65 4.8 L12.7 0.8" stroke="#b5b5bc" stroke-width="1" fill="none"/></svg>
<div class="t" style="left:343.86px;top:396.00px;font-size:13.5px;color:#b0b0b8;transform-origin:0 0;transform:scaleX(0.9794)">Support Calls</div>
<!-- content text -->
<div class="t" style="left:512.85px;top:252.00px;font-size:13px;color:#5c6068;transform-origin:0 0;transform:scaleX(0.9750)">Parent 1.1</div>
<div class="t" style="left:513.34px;top:275.00px;font-size:13px;color:#5c6068;transform-origin:0 0;transform:scaleX(0.9665)">Child 1.1</div>
<svg style="left:507px;top:295px" width="99" height="99" viewBox="0 0 33 33" shape-rendering="crispEdges"><rect width="33" height="33" fill="#fff"/><path d="M0 0h7v1h-7zM8 0h5v1h-5zM14 0h2v1h-2zM19 0h1v1h-1zM21 0h1v1h-1zM23 0h2v1h-2zM26 0h7v1h-7zM0 1h1v1h-1zM6 1h1v1h-1zM8 1h1v1h-1zM11 1h1v1h-1zM16 1h1v1h-1zM18 1h2v1h-2zM21 1h3v1h-3zM26 1h1v1h-1zM32 1h1v1h-1zM0 2h1v1h-1zM2 2h3v1h-3zM6 2h1v1h-1zM9 2h2v1h-2zM12 2h5v1h-5zM18 2h3v1h-3zM22 2h2v1h-2zM26 2h1v1h-1zM28 2h3v1h-3zM32 2h1v1h-1zM0 3h1v1h-1zM2 3h3v1h-3zM6 3h1v1h-1zM8 3h2v1h-2zM16 3h1v1h-1zM21 3h3v1h-3zM26 3h1v1h-1zM28 3h3v1h-3zM32 3h1v1h-1zM0 4h1v1h-1zM2 4h3v1h-3zM6 4h1v1h-1zM8 4h2v1h-2zM12 4h6v1h-6zM19 4h2v1h-2zM23 4h1v1h-1zM26 4h1v1h-1zM28 4h3v1h-3zM32 4h1v1h-1zM0 5h1v1h-1zM6 5h1v1h-1zM11 5h1v1h-1zM13 5h5v1h-5zM20 5h1v1h-1zM24 5h1v1h-1zM26 5h1v1h-1zM32 5h1v1h-1zM0 6h7v1h-7zM8 6h1v1h-1zM10 6h1v1h-1zM12 6h1v1h-1zM14 6h1v1h-1zM16 6h1v1h-1zM18 6h1v1h-1zM20 6h1v1h-1zM22 6h1v1h-1zM24 6h1v1h-1zM26 6h7v1h-7zM9 7h3v1h-3zM13 7h2v1h-2zM17 7h1v1h-1zM22 7h3v1h-3zM2 8h1v1h-1zM4 8h3v1h-3zM11 8h1v1h-1zM16 8h1v1h-1zM18 8h1v1h-1zM23 8h1v1h-1zM27 8h6v1h-6zM3 9h1v1h-1zM9 9h1v1h-1zM11 9h2v1h-2zM15 9h2v1h-2zM18 9h3v1h-3zM22 9h1v1h-1zM24 9h3v1h-3zM29 9h1v1h-1zM0 10h3v1h-3zM4 10h3v1h-3zM9 10h2v1h-2zM14 10h2v1h-2zM17 10h2v1h-2zM22 10h1v1h-1zM24 10h1v1h-1zM26 10h2v1h-2zM30 10h2v1h-2zM0 11h6v1h-6zM8 11h1v1h-1zM10 11h5v1h-5zM17 11h2v1h-2zM20 11h1v1h-1zM22 11h2v1h-2zM25 11h1v1h-1zM29 11h1v1h-1zM0 12h5v1h-5zM6 12h3v1h-3zM12 12h7v1h-7zM22 12h1v1h-1zM24 12h5v1h-5zM30 12h1v1h-1zM32 12h1v1h-1zM0 13h6v1h-6zM13 13h2v1h-2zM16 13h1v1h-1zM19 13h1v1h-1zM25 13h1v1h-1zM2 14h5v1h-5zM12 14h2v1h-2zM19 14h1v1h-1zM21 14h3v1h-3zM25 14h1v1h-1zM28 14h3v1h-3zM2 15h3v1h-3zM8 15h3v1h-3zM14 15h1v1h-1zM16 15h3v1h-3zM20 15h1v1h-1zM23 15h2v1h-2zM27 15h3v1h-3zM31 15h1v1h-1zM0 16h1v1h-1zM3 16h1v1h-1zM6 16h1v1h-1zM8 16h1v1h-1zM10 16h9v1h-9zM20 16h1v1h-1zM23 16h1v1h-1zM27 16h3v1h-3zM32 16h1v1h-1zM0 17h4v1h-4zM5 17h1v1h-1zM7 17h2v1h-2zM10 17h2v1h-2zM20 17h1v1h-1zM22 17h1v1h-1zM25 17h2v1h-2zM28 17h4v1h-4zM1 18h1v1h-1zM3 18h1v1h-1zM5 18h4v1h-4zM10 18h2v1h-2zM14 18h8v1h-8zM25 18h2v1h-2zM28 18h4v1h-4zM0 19h1v1h-1zM4 19h2v1h-2zM7 19h2v1h-2zM12 19h2v1h-2zM16 19h1v1h-1zM18 19h2v1h-2zM24 19h3v1h-3zM0 20h1v1h-1zM2 20h1v1h-1zM4 20h1v1h-1zM6 20h4v1h-4zM12 20h2v1h-2zM16 20h2v1h-2zM19 20h3v1h-3zM25 20h3v1h-3zM30 20h3v1h-3zM1 21h2v1h-2zM5 21h1v1h-1zM7 21h2v1h-2zM10 21h1v1h-1zM14 21h1v1h-1zM16 21h1v1h-1zM18 21h2v1h-2zM21 21h1v1h-1zM23 21h4v1h-4zM29 21h3v1h-3zM0 22h4v1h-4zM6 22h1v1h-1zM9 22h2v1h-2zM13 22h1v1h-1zM15 22h7v1h-7zM23 22h1v1h-1zM25 22h2v1h-2zM29 22h4v1h-4zM1 23h2v1h-2zM4 23h2v1h-2zM8 23h3v1h-3zM12 23h1v1h-1zM15 23h2v1h-2zM19 23h1v1h-1zM21 23h3v1h-3zM28 23h3v1h-3zM0 24h4v1h-4zM5 24h2v1h-2zM11 24h3v1h-3zM15 24h2v1h-2zM18 24h3v1h-3zM22 24h1v1h-1zM24 24h6v1h-6zM31 24h2v1h-2zM8 25h1v1h-1zM10 25h1v1h-1zM12 25h4v1h-4zM18 25h2v1h-2zM22 25h1v1h-1zM24 25h1v1h-1zM28 25h1v1h-1zM31 25h2v1h-2zM0 26h7v1h-7zM8 26h1v1h-1zM11 26h1v1h-1zM14 26h5v1h-5zM21 26h4v1h-4zM26 26h1v1h-1zM28 26h1v1h-1zM30 26h3v1h-3zM0 27h1v1h-1zM6 27h1v1h-1zM9 27h1v1h-1zM11 27h2v1h-2zM15 27h2v1h-2zM18 27h2v1h-2zM21 27h1v1h-1zM23 27h2v1h-2zM28 27h1v1h-1zM31 27h1v1h-1zM0 28h1v1h-1zM2 28h3v1h-3zM6 28h1v1h-1zM10 28h2v1h-2zM14 28h2v1h-2zM17 28h1v1h-1zM21 28h1v1h-1zM23 28h7v1h-7zM31 28h2v1h-2zM0 29h1v1h-1zM2 29h3v1h-3zM6 29h1v1h-1zM8 29h1v1h-1zM12 29h2v1h-2zM15 29h1v1h-1zM17 29h3v1h-3zM21 29h2v1h-2zM25 29h8v1h-8zM0 30h1v1h-1zM2 30h3v1h-3zM6 30h1v1h-1zM9 30h1v1h-1zM11 30h1v1h-1zM16 30h1v1h-1zM18 30h1v1h-1zM21 30h1v1h-1zM24 30h2v1h-2zM27 30h1v1h-1zM29 30h1v1h-1zM31 30h1v1h-1zM0 31h1v1h-1zM6 31h1v1h-1zM11 31h1v1h-1zM13 31h1v1h-1zM16 31h1v1h-1zM21 31h1v1h-1zM24 31h1v1h-1zM26 31h1v1h-1zM29 31h1v1h-1zM31 31h2v1h-2zM0 32h7v1h-7zM8 32h4v1h-4zM13 32h1v1h-1zM16 32h2v1h-2zM19 32h6v1h-6zM27 32h1v1h-1zM29 32h2v1h-2zM32 32h1v1h-1z" fill="#000"/></svg>
<!-- v scrollbar -->
<div class="a" style="left:1022px;top:96px;width:15px;height:498px;background:#f1f1f1"></div>
<div class="a" style="left:1024px;top:111px;width:11px;height:335px;background:#c1c1c1"></div>
<svg style="left:1025px;top:101px" width="9" height="5" viewBox="0 0 9 5"><path d="M0 5 L4.5 0 L9 5Z" fill="#a3a3a3"/></svg>
<svg style="left:1025px;top:584px" width="9" height="5" viewBox="0 0 9 5"><path d="M0 0 L4.5 5 L9 0Z" fill="#505050"/></svg>
<!-- h scrollbar -->
<div class="a" style="left:266px;top:594px;width:756px;height:15px;background:#f1f1f1"></div>
<div class="a" style="left:281px;top:596px;width:422px;height:11px;background:#c1c1c1"></div>
<svg style="left:271px;top:597px" width="5" height="9" viewBox="0 0 5 9"><path d="M5 0 L0 4.5 L5 9Z" fill="#a3a3a3"/></svg>
<svg style="left:1013px;top:597px" width="5" height="9" viewBox="0 0 5 9"><path d="M0 0 L5 4.5 L0 9Z" fill="#505050"/></svg>
<div class="a" style="left:1022px;top:594px;width:15px;height:15px;background:#dcdcdc"></div>
<!-- status bar -->
<div class="a" style="left:266px;top:609px;width:771px;height:25px;background:#2e2e2e"></div>
<div class="t" style="left:292.94px;top:614.00px;font-size:13px;color:#3b7ded;transform-origin:0 0;transform:scaleX(0.9488)">mainpage</div>

<!-- ============ RIGHT PANEL ============ -->

<div class="a" style="left:1038px;top:46px;width:277px;height:589px;background:#424242"></div>
<div class="a" style="left:1037px;top:46px;width:1px;height:589px;background:#161616"></div>
<div class="t" style="left:1050.06px;top:58.00px;font-size:14.5px;color:#ddd;transform-origin:0 0;transform:scaleX(0.9613)">wm-page: mainpage</div>
<div class="a" style="left:1038px;top:83px;width:277px;height:37px;background:#111"></div>
<div class="a" style="left:1038px;top:83px;width:56px;height:37px;background:#424242;border-top:2px solid #3b7ded"></div>
<!-- tab icons -->
<svg style="left:1060px;top:93px" width="13" height="18" viewBox="0 0 13 18"><path d="M9 0.8 L12.2 3 L3.8 16 L0.8 17.2 L0.8 13.8Z M7.7 2.8 L10.9 5" stroke="#fff" stroke-width="1.25" fill="none" stroke-linejoin="round"/></svg>
<svg style="left:1112px;top:93px" width="20" height="18" viewBox="0 0 20 18"><path d="M9 0.8 C4.2 0.8 0.8 4.2 0.8 8.8 C0.8 13.2 4 16.6 8 16.6 C9.4 16.6 9.8 15.6 9.4 14.6 C9 13.5 9.6 12.6 11 12.6 H13.2 C16.2 12.6 18.6 10.8 18.6 7.6 C18.6 3.6 14.4 0.8 9 0.8Z" stroke="#999" stroke-width="1.2" fill="none"/><circle cx="4.3" cy="8.2" r="1.2" fill="#999"/><circle cx="6.6" cy="4.4" r="1.2" fill="#999"/><circle cx="10.6" cy="3.6" r="1.2" fill="#999"/><circle cx="5" cy="12.4" r="1.2" fill="#999"/><path d="M18.3 0.5 L12 11.5" stroke="#111" stroke-width="3"/><path d="M18.3 0.5 L12.2 11" stroke="#999" stroke-width="1.1"/><path d="M12.2 10.6 L9.2 16.8 L11.2 16 L13.6 11.6Z" fill="#999"/></svg>
<svg style="left:1168px;top:92.5px" width="20" height="19" viewBox="0 0 20 19"><circle cx="7.4" cy="7.4" r="6.7" stroke="#999" stroke-width="1.3" fill="none"/><path d="M9.8 7 L19 10.6 L15.4 12.1 L19.2 15.9 L17.6 17.5 L13.8 13.7 L12.3 17.3Z" fill="#111" stroke="#999" stroke-width="1.2" stroke-linejoin="round"/></svg>
<svg style="left:1224.5px;top:95.5px" width="20" height="13" viewBox="0 0 20 13"><rect x="0.6" y="0.6" width="14.6" height="9.8" rx="2" stroke="#999" stroke-width="1.2" fill="none"/><path d="M5 12 H10" stroke="#999" stroke-width="1.2"/><rect x="12.2" y="4.2" width="6.6" height="8.4" rx="1" fill="#111" stroke="#999" stroke-width="1.2"/><path d="M13 10.6 H18" stroke="#999" stroke-width="0.9"/></svg>
<svg style="left:1281px;top:92px" width="16" height="19" viewBox="0 0 16 19"><path d="M8 1 L15 3.5 V9 C15 13.5 12 16.5 8 18 C4 16.5 1 13.5 1 9 V3.5Z" stroke="#999" stroke-width="1.3" fill="none"/></svg>
<!-- search -->
<div class="a" style="left:1046px;top:128px;width:264px;height:28px;border:1px solid #585858;border-radius:4px;background:#2e2e2e"></div>
<svg style="left:1056px;top:137px" width="11" height="11" viewBox="0 0 11 11"><circle cx="5" cy="5" r="4.2" stroke="#aaa" stroke-width="1.2" fill="none"/><path d="M8 8 L10.5 10.5" stroke="#aaa" stroke-width="1.2"/></svg>
<div class="t" style="left:1072.97px;top:136.00px;font-size:12.5px;color:#777;transform-origin:0 0;transform:scaleX(0.8840)">Search...</div>
<div class="a" style="left:1038px;top:164px;width:277px;height:1px;background:#555"></div>
<!-- Accessibility -->
<div class="a" style="left:1038px;top:185px;width:277px;height:23.5px;background:#1c1c1c"></div>
<div class="t" style="left:1047.97px;top:190.00px;font-size:13px;color:#ddd;transform-origin:0 0;transform:scaleX(1.0259)">Accessibility</div>
<div class="t" style="left:1047.40px;top:226.00px;font-size:11.5px;color:#ccc;transform-origin:0 0;transform:scaleX(1.0079)">Hint</div>
<div class="a" style="left:1048px;top:244px;width:222px;height:28px;border:1px solid #5a5a5a;border-radius:3px;background:#2e2e2e"></div>
<svg style="left:1278.5px;top:252px" width="13" height="13" viewBox="0 0 13 13"><g transform="rotate(-45 6.5 6.5)"><rect x="0.2" y="4.3" width="7.4" height="4.4" rx="2.2" stroke="#c8c8c8" stroke-width="1.1" fill="none"/><rect x="5.4" y="4.3" width="7.4" height="4.4" rx="2.2" stroke="#c8c8c8" stroke-width="1.1" fill="none"/></g></svg>
<!-- Behavior -->
<div class="a" style="left:1038px;top:286px;width:277px;height:24px;background:#1c1c1c"></div>
<div class="t" style="left:1047.12px;top:291.00px;font-size:13px;color:#ddd;transform-origin:0 0;transform:scaleX(0.9928)">Behavior</div>
<div class="t" style="left:1047.70px;top:328.00px;font-size:11.5px;color:#ccc;transform-origin:0 0;transform:scaleX(0.9459)">Cache</div>
<div class="a" style="left:1221px;top:323px;width:37px;height:21px;border-radius:11px;background:#c8c8c8"></div>
<div class="a" style="left:1221px;top:323px;width:21px;height:21px;border-radius:50%;background:#8f8f8f"></div>
<div class="t" style="left:1047.45px;top:364.00px;font-size:11.5px;color:#ccc;transform-origin:0 0;transform:scaleX(0.9642)">Page Title</div>
<div class="a" style="left:1048px;top:382px;width:222px;height:28px;border:1px solid #5a5a5a;border-radius:3px;background:#2e2e2e"></div>
<div class="t" style="left:1058.26px;top:391.00px;font-size:11.5px;color:#ccc;transform-origin:0 0;transform:scaleX(1.0267)">Main</div>
<svg style="left:1278.5px;top:389.8px" width="13" height="13" viewBox="0 0 13 13"><g transform="rotate(-45 6.5 6.5)"><rect x="0.2" y="4.3" width="7.4" height="4.4" rx="2.2" stroke="#c8c8c8" stroke-width="1.1" fill="none"/><rect x="5.4" y="4.3" width="7.4" height="4.4" rx="2.2" stroke="#c8c8c8" stroke-width="1.1" fill="none"/></g></svg>
<!-- Page Params -->
<div class="a" style="left:1038px;top:425px;width:277px;height:23.7px;background:#1c1c1c"></div>
<div class="t" style="left:1047.33px;top:430.00px;font-size:13px;color:#ddd;transform-origin:0 0;transform:scaleX(0.9878)">Page Params</div>
<div class="a" style="left:1048px;top:462px;width:230px;height:65px;background:#2d2d2d"></div>
<div class="a" style="left:1048px;top:490px;width:230px;height:37px;background:#333"></div>
<div class="a" style="left:1183px;top:462px;width:1px;height:65px;background:#3a3a3a"></div>
<div class="a" style="left:1256px;top:462px;width:1px;height:65px;background:#3a3a3a"></div>
<div class="t" style="left:1053.36px;top:470.00px;font-size:12px;color:#ddd;transform-origin:0 0;transform:scaleX(1.0222)">Name</div>
<div class="t" style="left:1189.68px;top:470.00px;font-size:12px;color:#ddd;transform-origin:0 0;transform:scaleX(0.9714)">Type</div>
<div class="a" style="left:1053px;top:495px;width:126px;height:27px;border:1px solid #5a5a5a;border-radius:3px;background:#2b2b2b"></div>
<div class="t" style="left:1063.53px;top:502.00px;font-size:12.5px;color:#888;transform-origin:0 0;transform:scaleX(0.8874)">parameter name</div>
<div class="a" style="left:1188px;top:495px;width:63px;height:27px;border:1px solid #5a5a5a;border-radius:3px;background:#2b2b2b"></div>
<div class="t" style="left:1198.58px;top:502.00px;font-size:12.5px;color:#ccc;transform-origin:0 0;transform:scaleX(1.0255)">string</div>
<div class="a" style="left:1225px;top:498px;width:9px;height:20px;background:#2b2b2b"></div>
<svg style="left:1239px;top:505px" width="9" height="7" viewBox="0 0 9 7"><path d="M0.9 1 L4.5 4.8 L8.1 1" stroke="#eee" stroke-width="1.8" fill="none"/></svg>
<svg style="left:1260px;top:501px" width="13" height="13" viewBox="0 0 13 13"><path d="M6.5 0.5 V12.5 M0.5 6.5 H12.5" stroke="#ddd" stroke-width="1.6"/></svg>



<!-- red arrow -->
<svg style="left:0;top:0" width="1315" height="635" viewBox="0 0 1315 635">
<path d="M503 97.5 L603 54" stroke="#cc1d1d" stroke-width="4.6" stroke-linecap="round"/>
<path d="M617 47.5 L594 49 L601 64.5Z" fill="#cc1d1d"/>
</svg>
</body></html>
